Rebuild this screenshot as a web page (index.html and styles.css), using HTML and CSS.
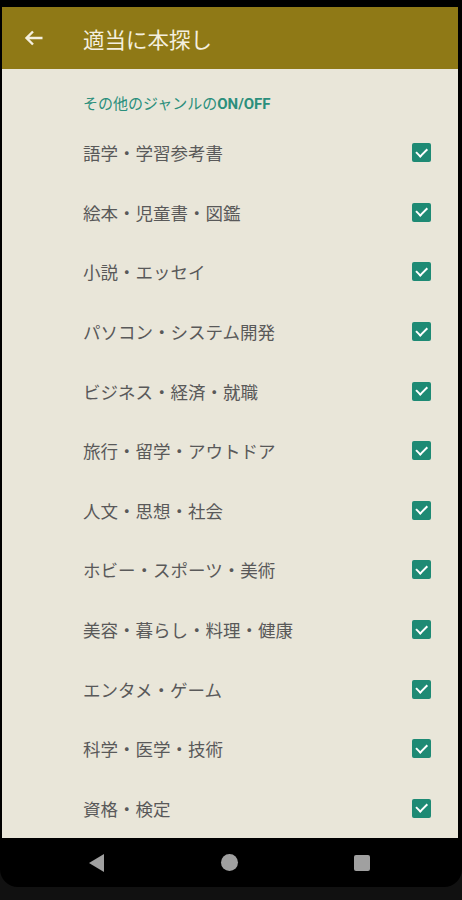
FILE: index.html
```html
<!DOCTYPE html>
<html lang="ja">
<head>
    <meta charset="UTF-8">
    <meta name="viewport" content="width=device-width, initial-scale=1.0">
    <title>適当に本探し</title>
    <link rel="stylesheet" href="styles.css">
</head>
<body>
    <div class="phone">
        <div class="status-bar"></div>
        <div class="screen">
            <header class="app-bar">
                <svg class="back" width="20" height="16" viewBox="0 0 20 16">
                    <path d="M18.5 8H2.5M9 1.5L2.5 8L9 14.5" fill="none" stroke="currentColor" stroke-width="2.4"/>
                </svg>
                <h1>適当に本探し</h1>
            </header>
            <main class="settings">
                <div class="section-title">その他のジャンルの<b>ON/OFF</b></div>
                <ul class="genres">
                    <li><span>語学・学習参考書</span><i class="check"></i></li>
                    <li><span>絵本・児童書・図鑑</span><i class="check"></i></li>
                    <li><span>小説・エッセイ</span><i class="check"></i></li>
                    <li><span>パソコン・システム開発</span><i class="check"></i></li>
                    <li><span>ビジネス・経済・就職</span><i class="check"></i></li>
                    <li><span>旅行・留学・アウトドア</span><i class="check"></i></li>
                    <li><span>人文・思想・社会</span><i class="check"></i></li>
                    <li><span>ホビー・スポーツ・美術</span><i class="check"></i></li>
                    <li><span>美容・暮らし・料理・健康</span><i class="check"></i></li>
                    <li><span>エンタメ・ゲーム</span><i class="check"></i></li>
                    <li><span>科学・医学・技術</span><i class="check"></i></li>
                    <li><span>資格・検定</span><i class="check"></i></li>
                </ul>
            </main>
        </div>
        <nav class="nav-bar">
            <span class="nav-back"></span>
            <span class="nav-home"></span>
            <span class="nav-recent"></span>
        </nav>
    </div>
</body>
</html>
```

FILE: styles.css
```css
html, body {
    margin: 0;
    padding: 0;
    background: #111;
    font-family: "Noto Sans CJK JP", "Noto Sans", sans-serif;
}

.phone {
    width: 462px;
    height: 887px;
    background: #000;
    border-radius: 0 0 18px 18px;
    overflow: hidden;
}

.status-bar {
    height: 7px;
}

.screen {
    margin: 0 4px 0 2px;
}

.app-bar {
    height: 62px;
    background: #8f7916;
    color: #f4efdf;
    display: flex;
    align-items: center;
}
.back {
    margin-left: 22px;
    margin-right: 39px;
}
.app-bar h1 {
    margin: 0;
    font-size: 21.5px;
    font-weight: 400;
}

.settings {
    background: #e9e6d9;
    height: 769px;
}

.section-title {
    padding: 24px 0 0 81px;
    height: 30px;
    font-size: 15px;
    line-height: 20px;
    color: #2b8f7c;
}
.section-title b {
    font-family: "Roboto", sans-serif;
    font-weight: 700;
}

.genres {
    list-style: none;
    margin: 0;
    padding: 0;
}
.genres li {
    height: 59.6px;
    display: flex;
    align-items: center;
    justify-content: space-between;
    padding: 0 27px 0 81px;
    font-size: 17.5px;
    color: #595959;
}

.check {
    width: 19px;
    height: 19px;
    border-radius: 2px;
    background: #1e8a74;
    position: relative;
}
.check::after {
    content: "";
    position: absolute;
    left: 4px;
    top: 4.5px;
    width: 9px;
    height: 4.5px;
    border-left: 2px solid #fff;
    border-bottom: 2px solid #fff;
    transform: rotate(-45deg);
}

.nav-bar {
    height: 49px;
    display: flex;
    align-items: center;
    justify-content: space-between;
    padding: 0 92px 0 89px;
}
.nav-back {
    width: 0;
    height: 0;
    border-top: 9px solid transparent;
    border-bottom: 9px solid transparent;
    border-right: 15px solid #a0a0a0;
}
.nav-home {
    width: 17px;
    height: 17px;
    border-radius: 50%;
    background: #a0a0a0;
}
.nav-recent {
    width: 16px;
    height: 16px;
    border-radius: 2px;
    background: #a0a0a0;
}
```
